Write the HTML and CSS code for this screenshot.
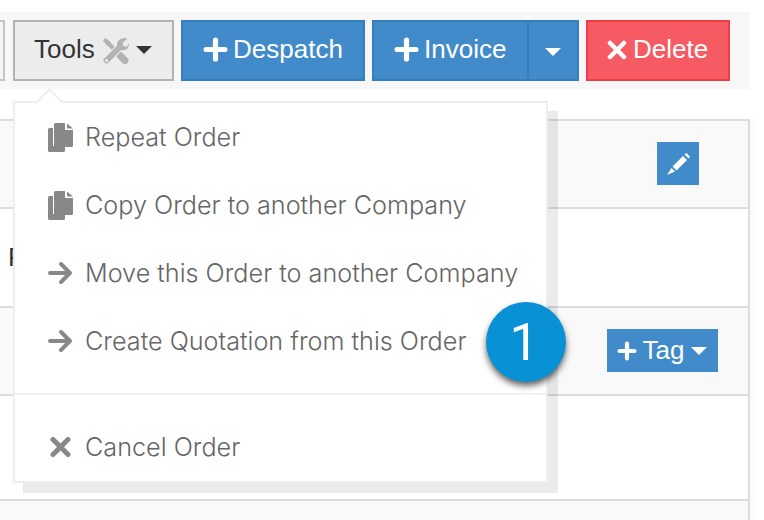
FILE: index.html
```html
<!DOCTYPE html>
<html lang="en">
<head>
<meta charset="utf-8">
<title>Order tools</title>
<link rel="stylesheet" href="styles.css">
</head>
<body>
<div class="page">
  <div class="toolbar">
    <div class="stub"></div>
    <button class="btn btn-default">Tools
      <svg class="ic-tools" viewBox="0 0 27 28"><path class="tool-tip" d="M1 3.500L3.500 1L9 5.500L8.500 8.500L5.500 9Z"/><path class="tool-fill" d="M5 5L21 21.500"/><path class="tool-handle" d="M18 18.500L23 23.500"/><path class="tool-gap" d="M4.500 23.500L18 10"/><path class="tool-body" d="M4.500 23.500L18 10"/><path class="tool-head" d="M25.500 1.500L20.500 6L21.500 9L24.500 10L27 6Q27.500 10.500 24 12.500Q20.500 14 18 12.500L15.500 10Q14 6.500 16.500 3.500Q20 0 25.500 1.500Z"/><circle class="tool-hole" cx="4.500" cy="23.500" r="1.500"/></svg>
      <span class="caret caret-dark"></span></button>
    <button class="btn btn-primary btn-despatch"><svg class="ic-plus" viewBox="0 0 24 24"><path d="M12 3V21M3 12H21"/></svg>Despatch</button>
    <div class="split">
      <button class="btn btn-primary btn-main"><svg class="ic-plus" viewBox="0 0 24 24"><path d="M12 3V21M3 12H21"/></svg>Invoice</button>
      <button class="btn btn-primary btn-side"><span class="caret"></span></button>
    </div>
    <button class="btn btn-danger"><svg class="ic-x" viewBox="0 0 20 20"><path d="M3 3L17 17M17 3L3 17"/></svg>Delete</button>
  </div>

  <div class="panel">
    <div class="row row-a row-1"><button class="chip chip-edit" aria-label="Edit"><svg class="ic-pencil" viewBox="0 0 23 22"><path d="M5.500 13.500L16 3L20 7L9.500 17.500ZM17.500 1.500L18.500 0.500Q19.500 0 20 0.500L22.500 3Q23 3.500 22.500 4.500L21.500 5.500ZM4.500 15L8 18.500L0 22Z" fill="#fff"/></svg></button></div>
    <div class="row row-2"><span class="cell-text">F</span></div>
    <div class="row row-a row-3"><button class="chip chip-tag"><svg class="ic-plus ic-plus-sm" viewBox="0 0 24 24"><path d="M12 3V21M3 12H21"/></svg>Tag<span class="caret"></span></button></div>
    <div class="row row-4"></div>
    <div class="row row-a row-5"></div>
  </div>

  <div class="menu">
    <span class="menu-arrow"></span>
    <a class="item"><svg class="ic-files" viewBox="0 0 25 29"><path d="M1.500 5H5V23H17V27.500Q17 29 15.500 29H1.500Q0 29 0 27.500V6.500Q0 5 1.500 5Z"/><path d="M7.500 0H17V7H25V22.500Q25 24 23.500 24H7.500Q6 24 6 22.500V1.500Q6 0 7.500 0ZM19 0.500L25 5.500H19Z"/></svg>Repeat Order</a>
    <a class="item"><svg class="ic-files" viewBox="0 0 25 29"><path d="M1.500 5H5V23H17V27.500Q17 29 15.500 29H1.500Q0 29 0 27.500V6.500Q0 5 1.500 5Z"/><path d="M7.500 0H17V7H25V22.500Q25 24 23.500 24H7.500Q6 24 6 22.500V1.500Q6 0 7.500 0ZM19 0.500L25 5.500H19Z"/></svg>Copy Order to another Company</a>
    <a class="item"><svg class="ic-arrow" viewBox="0 0 25 24"><path d="M2 12H22M13 3L22 12L13 21"/></svg>Move this Order to another Company</a>
    <a class="item"><svg class="ic-arrow" viewBox="0 0 25 24"><path d="M2 12H22M13 3L22 12L13 21"/></svg>Create Quotation from this Order</a>
    <div class="divider"></div>
    <a class="item"><svg class="ic-cross" viewBox="0 0 25 20"><path d="M5 2.500L20 17.500M20 2.500L5 17.500"/></svg>Cancel Order</a>
  </div>

  <div class="badge">1</div>
</div>
</body>
</html>
```

FILE: styles.css
```css
* { box-sizing: border-box; }
html, body { margin: 0; padding: 0; background: #fff; }
.page {
  position: relative;
  width: 764px;
  height: 520px;
  overflow: hidden;
  padding-top: 12px;
  font-family: "Liberation Sans", Arial, sans-serif;
}
.toolbar {
  display: flex;
  gap: 7px;
  width: 750px;
  height: 77px;
  padding: 8px 0;
  background: #f7f7f7;
}
.stub {
  width: 5px;
  margin-right: 1px;
  border: 2px solid #c4c4c4;
  border-left: 0;
  background: #f4f4f4;
}
.btn {
  display: flex;
  align-items: center;
  height: 61px;
  padding: 0 0 2px 20px;
  border: 2px solid;
  border-radius: 0;
  font: 26px "Liberation Sans", Arial, sans-serif;
  color: #fff;
}
.btn-default { width: 161px; padding-left: 19px; background: #ececec; border-color: #b3b3b3; color: #333; }
.btn-primary { background: #428bca; border-color: #357ebd; }
.btn-despatch { width: 184px; }
.btn-danger { width: 144px; padding-left: 19px; background: #f65a62; border-color: #f23c45; }
.split { display: flex; }
.btn-main { width: 157px; }
.btn-side { width: 50px; padding: 2px 0 0; justify-content: center; border-left: 0; }
.ic-tools { flex: none; width: 27px; height: 28px; margin: 2px 7px 0 7px; fill: none; }
.tool-tip { fill: #b3b3b3; }
.tool-fill { stroke: #b3b3b3; stroke-width: 4; }
.tool-handle { stroke: #b3b3b3; stroke-width: 7; stroke-linecap: round; }
.tool-gap { stroke: #ececec; stroke-width: 8; stroke-linecap: round; }
.tool-body { stroke: #b3b3b3; stroke-width: 6; stroke-linecap: round; }
.tool-head { fill: #b3b3b3; }
.tool-hole { fill: #ececec; }
.ic-plus { flex: none; width: 25px; height: 25px; margin-right: 5px; fill: none; stroke: #fff; stroke-width: 5; stroke-linecap: round; }
.ic-plus-sm { width: 20px; height: 20px; margin-right: 6px; }
.ic-x { flex: none; width: 20px; height: 20px; margin-right: 6px; fill: none; stroke: #fff; stroke-width: 4.500; stroke-linecap: round; }
.caret {
  display: inline-block;
  width: 0;
  height: 0;
  border-top: 8px solid #fff;
  border-left: 8px solid transparent;
  border-right: 8px solid transparent;
}
.caret-dark { border-top-color: #333; }
.panel {
  width: 750px;
  margin-top: 30px;
  border-top: 2px solid #ddd;
  border-right: 2px solid #ddd;
  box-shadow: 4px 0 6px rgba(0, 0, 0, .025);
}
.row { display: flex; align-items: center; justify-content: flex-end; border-bottom: 2px solid #ddd; }
.row-a { background: #f9f9f9; }
.row-1 { height: 88px; padding: 0 49px 1px 0; }
.row-2 { height: 99px; justify-content: flex-start; padding-left: 8px; }
.row-3 { height: 88px; padding: 0 30px 1px 0; }
.row-4 { height: 105px; }
.row-5 { height: 40px; border-bottom: 0; }
.cell-text { font-size: 26px; color: #333; }
.chip { display: flex; align-items: center; justify-content: center; border: 0; padding: 0; background: #428bca; color: #fff; font: 26px "Liberation Sans", Arial, sans-serif; }
.chip-edit { width: 42px; height: 43px; }
.chip-tag { width: 111px; height: 43px; padding-right: 1px; }
.chip-tag .caret { margin: 0 0 0 7px; }
.ic-pencil { width: 23px; height: 22px; }
.menu {
  position: absolute;
  left: 13px;
  top: 101px;
  width: 535px;
  height: 382px;
  border: 2px solid #eee;
  background: #fff;
  box-shadow: 10px 10px 0 rgba(0, 0, 0, .08);
}
.menu-arrow {
  position: absolute;
  left: 25px;
  top: -11px;
  width: 19px;
  height: 19px;
  background: #fff;
  border-top: 2px solid #eee;
  border-left: 2px solid #eee;
  transform: rotate(45deg);
}
.item {
  position: relative;
  display: flex;
  align-items: center;
  gap: 12px;
  height: 68px;
  padding-left: 33px;
  font: 300 25.2px Inter, "Liberation Sans", sans-serif;
  color: #666;
  white-space: nowrap;
}
.item svg { flex: none; width: 25px; }
.ic-files { height: 29px; fill: #888; }
.ic-arrow { height: 24px; fill: none; stroke: #888; stroke-width: 4; stroke-linecap: round; stroke-linejoin: round; }
.ic-cross { height: 20px; fill: none; stroke: #888; stroke-width: 5; stroke-linecap: round; }
.divider { height: 2px; margin: 18px 0; background: #f1f1f5; }
.badge {
  position: absolute;
  left: 486px;
  top: 302px;
  width: 80px;
  height: 80px;
  display: flex;
  align-items: center;
  justify-content: center;
  padding-right: 4px;
  border-radius: 50%;
  background: #0891d5;
  box-shadow: 0 4px 6px rgba(0, 0, 0, .6);
  color: #fff;
  font: 400 52px Roboto, "Liberation Sans", sans-serif;
}
```
